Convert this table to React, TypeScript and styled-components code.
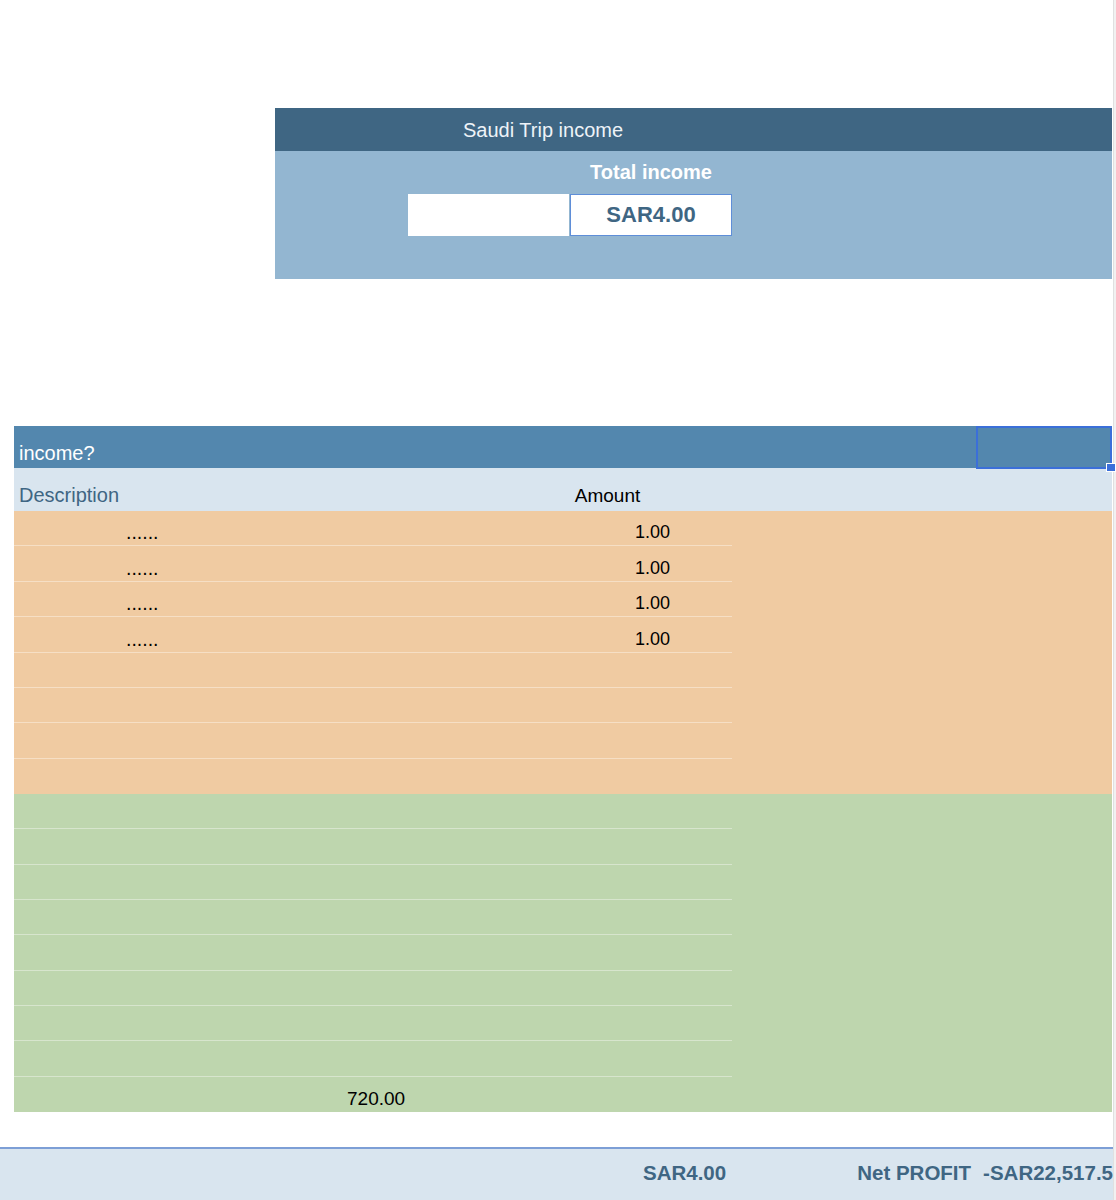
import React from "react";
import styled, { createGlobalStyle } from "styled-components";

const Global = createGlobalStyle`
  html, body { margin: 0; padding: 0; background: #ffffff; }
  body { font-family: "Liberation Sans", Arial, Helvetica, sans-serif; }
  * { box-sizing: border-box; }
`;

const Page = styled.div`
  display: flex;
  width: 1116px;
  height: 1200px;
  overflow: hidden;
  background: #ffffff;
`;

const Main = styled.div`
  width: 1113px;
  display: flex;
  flex-direction: column;
`;

const ScrollEdge = styled.div`
  flex: 1;
  background: #f1f1f1;
  border-left: 1px solid #e0e0e0;
`;

/* ---------- Summary block ---------- */
const Summary = styled.section`
  margin: 108px 1px 0 275px;
  display: flex;
  flex-direction: column;
`;

const Banner = styled.div`
  height: 43px;
  background: #3f6683;
  color: #eef3f8;
  font-size: 20px;
  display: flex;
  align-items: center;
  padding: 2px 0 0 188px;
`;

const SummaryBody = styled.div`
  height: 128px;
  background: #93b6d1;
  display: grid;
  grid-template-columns: 133px 162px 162px;
  grid-template-rows: 43px 42px;
`;

const TotalLabel = styled.div`
  grid-column: 3;
  grid-row: 1;
  display: flex;
  align-items: center;
  justify-content: center;
  color: #ffffff;
  font-weight: 700;
  font-size: 20px;
`;

const InputBox = styled.div<{ $framed?: boolean }>`
  grid-row: 2;
  grid-column: ${(p) => (p.$framed ? 3 : 2)};
  margin-right: ${(p) => (p.$framed ? "0" : "1px")};
  background: #ffffff;
  border: ${(p) => (p.$framed ? "1px solid #5f8ed8" : "none")};
  display: flex;
  align-items: center;
  justify-content: center;
  color: #3f6683;
  font-weight: 700;
  font-size: 22px;
`;

/* ---------- Income table ---------- */
const Table = styled.section`
  margin: 147px 1px 0 14px;
  display: flex;
  flex-direction: column;
`;

const HeaderRow = styled.div`
  position: relative;
  height: 42px;
  background: #5387ae;
  color: #ffffff;
  font-size: 20px;
  line-height: 23px;
  display: flex;
  align-items: flex-end;
  padding: 0 0 3px 5px;
`;

const SelectedCell = styled.div`
  position: absolute;
  right: 0;
  top: 0;
  width: 136px;
  height: 43px;
  border: 2px solid #3b6fd9;
`;

const FillHandle = styled.div`
  position: absolute;
  right: -6px;
  bottom: -5px;
  width: 10px;
  height: 9px;
  background: #3b6fd9;
  border: 1px solid #ffffff;
  z-index: 2;
`;

const DescRow = styled.div`
  height: 43px;
  background: #d9e5ef;
  display: grid;
  grid-template-columns: 531px 128px 1fr;
  align-items: end;
  padding-bottom: 4px;
`;

const DescLabel = styled.div`
  color: #3f6683;
  font-size: 20px;
  line-height: 23px;
  padding-left: 5px;
`;

const AmountLabel = styled.div`
  color: #000000;
  font-size: 19px;
  line-height: 22px;
  text-align: center;
  padding-right: 3px;
`;

const Block = styled.div<{ $bg: string; $rows: number; $h: number }>`
  background: ${(p) => p.$bg};
  height: ${(p) => p.$h}px;
  display: grid;
  grid-template-rows: repeat(${(p) => p.$rows}, 1fr);
`;

const Row = styled.div`
  display: flex;
`;

const RowLeft = styled.div<{ $line: boolean }>`
  width: 718px;
  display: grid;
  grid-template-columns: 531px 128px 1fr;
  align-items: end;
  padding-bottom: 2px;
  border-bottom: 1px solid ${(p) => (p.$line ? "rgba(255,255,255,0.38)" : "transparent")};
  font-size: 18px;
  line-height: 21px;
  color: #000000;
`;

const DescCell = styled.div<{ $indent: number; $size: number }>`
  padding-left: ${(p) => p.$indent}px;
  font-size: ${(p) => p.$size}px;
`;

const AmountCell = styled.div`
  text-align: right;
  padding-right: 3px;
`;

/* ---------- Footer ---------- */
const Footer = styled.footer`
  margin-top: 35px;
  flex: 1;
  border-top: 2px solid #7d9fd6;
  background: #d9e5ef;
  display: flex;
  align-items: flex-start;
  padding-top: 12px;
  color: #3f6683;
  font-weight: 700;
  font-size: 20.5px;
  line-height: 23px;
  overflow: hidden;
  white-space: nowrap;
`;

const FooterTotal = styled.div`
  width: 730px;
  text-align: right;
  padding-right: 3px;
`;

const FooterProfit = styled.div`
  margin-left: 128px;
  display: flex;
  gap: 12px;
`;

type Line = { desc?: string; amount?: string; indent?: number; size?: number };

const dots: Line = { desc: "......", amount: "1.00", size: 19.5 };

const orange: Line[] = [dots, dots, dots, dots, {}, {}, {}, {}];

const green: Line[] = [
  {}, {}, {}, {}, {}, {}, {}, {},
  { desc: "720.00", indent: 333, size: 19 },
];

function Rows({ lines }: { lines: Line[] }) {
  return (
    <>
      {lines.map((l, i) => (
        <Row key={i}>
          <RowLeft $line={i < lines.length - 1}>
            <DescCell $indent={l.indent ?? 112} $size={l.size ?? 18}>
              {l.desc ?? ""}
            </DescCell>
            <AmountCell>{l.amount ?? ""}</AmountCell>
            <div />
          </RowLeft>
        </Row>
      ))}
    </>
  );
}

export default function App() {
  return (
    <>
      <Global />
      <Page>
        <Main>
          <Summary>
            <Banner>Saudi Trip income</Banner>
            <SummaryBody>
              <TotalLabel>Total income</TotalLabel>
              <InputBox />
              <InputBox $framed>SAR4.00</InputBox>
            </SummaryBody>
          </Summary>

          <Table>
            <HeaderRow>
              income?
              <SelectedCell>
                <FillHandle />
              </SelectedCell>
            </HeaderRow>
            <DescRow>
              <DescLabel>Description</DescLabel>
              <AmountLabel>Amount</AmountLabel>
              <div />
            </DescRow>
            <Block $bg="#f0cba2" $rows={8} $h={283}>
              <Rows lines={orange} />
            </Block>
            <Block $bg="#bed6ae" $rows={9} $h={318}>
              <Rows lines={green} />
            </Block>
          </Table>

          <Footer>
            <FooterTotal>SAR4.00</FooterTotal>
            <FooterProfit>
              <span>Net PROFIT</span>
              <span>-SAR22,517.5</span>
            </FooterProfit>
          </Footer>
        </Main>
        <ScrollEdge />
      </Page>
    </>
  );
}
